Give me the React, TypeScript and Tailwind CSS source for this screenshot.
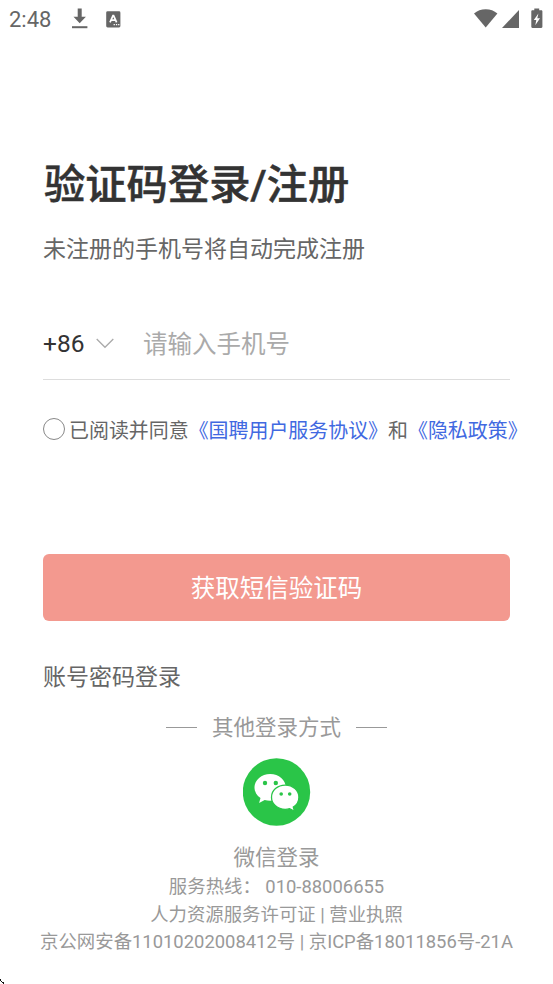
import type { ReactNode } from "react";

/* ─── Icons ──────────────────────────────────────────────────────────────── */
function DownloadIcon() {
  return (
    <svg width="17" height="22" viewBox="0 0 17 22" fill="#666" aria-hidden="true">
      <path d="M6.700.5h4v8.200h4.200L8.700 15.200 2.500 8.700h4.200z" />
      <path d="M1 18.200h15.400v2H1z" />
    </svg>
  );
}

function KeyboardIcon() {
  return (
    <svg width="15" height="17" viewBox="0 0 15 17" aria-hidden="true">
      <rect x="0.2" y="0.3" width="14.2" height="16.2" rx="1.4" fill="#666" />
      <path d="M4 11.4 7 4.6h.6l3 6.8M5.2 9.2h4.2" fill="none" stroke="#fff" strokeWidth="1.7" />
      <path d="M7.6 13h1.3v1.3H7.6zM9.9 13h1.3v1.3H9.900zM12.1 13h1.3v1.3h-1.3z" fill="#fff" />
    </svg>
  );
}

function WifiIcon() {
  return (
    <svg width="24" height="19" viewBox="0 0 24 19" fill="#666" aria-hidden="true">
      <path d="M0 4.600C3.200 1.800 7.200.3 11.700.3s8.500 1.500 11.700 4.300L11.700 18.400z" />
    </svg>
  );
}

function SignalIcon() {
  return (
    <svg width="18" height="18" viewBox="0 0 18 18" fill="#666" aria-hidden="true">
      <path d="M17 0v18H0z" />
    </svg>
  );
}

function BatteryIcon() {
  return (
    <svg width="12" height="21" viewBox="0 0 12 21" aria-hidden="true">
      <path
        d="M3.300.500h4.900v1.700h2.100c.6 0 1.100.5 1.100 1.100v15.500c0 .6-.5 1.100-1.100 1.100H1.400c-.6 0-1.100-.5-1.100-1.100V3.300c0-.6.5-1.100 1.100-1.100h1.900z"
        fill="#666"
      />
      <path d="M7.400 5.400 2.800 12h2.500l-1 5.200L9 10.300H6.300z" fill="#fff" />
    </svg>
  );
}

function WechatIcon() {
  return (
    <svg width="68" height="68" viewBox="0 0 68 68" aria-hidden="true">
      <circle cx="33.500" cy="34" r="33.700" fill="#2ac548" />
      <path
        d="M27.200 16C18.500 16 11.500 22 11.500 29.500c0 4.300 2.300 8 6 10.500l-1.400 4.900 5.600-2.900c1.700.5 3.500.8 5.400.8 8.700 0 15.700-5.900 15.700-13.300S35.900 16 27.200 16z"
        fill="#fff"
      />
      <path
        d="M42.200 27.100c-7.700 0-13.700 5.300-13.700 12.100s6 12.100 13.700 12.100c1.500 0 3-.2 4.400-.6l4.900 2.600-1.200-4.300c3.500-2.100 5.600-5.600 5.600-9.800 0-6.800-6-12.100-13.700-12.100z"
        fill="#fff"
        stroke="#2ac548"
        strokeWidth="1.300"
      />
      <g fill="#2ac548">
        <circle cx="22" cy="25" r="2.200" />
        <circle cx="32.800" cy="25" r="2.200" />
        <circle cx="38.200" cy="36" r="1.800" />
        <circle cx="46.700" cy="36" r="1.800" />
      </g>
    </svg>
  );
}

/* ─── Pieces ─────────────────────────────────────────────────────────────── */
function StatusBar() {
  return (
    <header className="flex h-[38px] items-center justify-between pl-[9px] pr-[10px] text-[#666]">
      <div className="flex items-center">
        <span className="w-[62px] pt-px text-[22px] leading-[38px]">2:48</span>
        <DownloadIcon />
        <span className="ml-[18px]">
          <KeyboardIcon />
        </span>
      </div>
      <div className="flex items-center pb-px">
        <WifiIcon />
        <span className="ml-[4px]">
          <SignalIcon />
        </span>
        <span className="ml-[11px]">
          <BatteryIcon />
        </span>
      </div>
    </header>
  );
}

function Agreement({ children }: { children: ReactNode }) {
  return <a className="text-[#4169e1]">{children}</a>;
}

const footerLines = [
  "服务热线： 010-88006655",
  "人力资源服务许可证 | 营业执照",
  "京公网安备11010202008412号 | 京ICP备18011856号-21A",
];

/* ─── App ────────────────────────────────────────────────────────────────── */
export default function App() {
  return (
    <div className="relative h-[984px] w-[553px] overflow-hidden bg-white font-[Roboto,'Noto_Sans_CJK_SC',sans-serif] text-[#666]">
      <StatusBar />

      <main className="px-[43px] pt-[117px]">
        <h1 className="h-[60px] whitespace-nowrap pl-px text-[41.300px] font-medium leading-[60px] text-[#333] [-webkit-text-stroke:0.5px_#333]">
          验证码登录/注册
        </h1>
        <p className="mt-[19px] h-8 text-[23px] leading-8">未注册的手机号将自动完成注册</p>

        {/* Phone number */}
        <div className="mt-[42px] flex h-[72px] items-center border-b border-[#ddd] text-[24.500px]">
          <span className="w-[53px] pt-[2px] text-[#333]">+86</span>
          <svg width="18" height="11" viewBox="0 0 18 11" fill="none" stroke="#aaa" strokeWidth="1.300" aria-hidden="true">
            <path d="M.7 1 9 9.300 17.300 1" />
          </svg>
          <span className="ml-[29px] pt-[3px] text-[#aaa]">请输入手机号</span>
        </div>

        {/* Terms */}
        <div className="mt-[33px] flex h-8 items-center whitespace-nowrap text-[19.950px]">
          <span className="mr-[4px] size-[22px] shrink-0 rounded-full border-[1.500px] border-[#888]" />
          <span className="pt-[5px]">
            已阅读并同意<Agreement>《国聘用户服务协议》</Agreement>和<Agreement>《隐私政策》</Agreement>
          </span>
        </div>

        <button className="mt-[109px] flex h-[67px] w-full items-center justify-center rounded-[6px] bg-[#f3998f] pt-[3px] text-[24.500px] text-white">
          获取短信验证码
        </button>
        <p className="mt-[41px] h-8 text-[23px] leading-8">账号密码登录</p>
      </main>

      {/* Other sign-in methods */}
      <section className="flex flex-col items-center pt-[17px] text-[21.500px] text-[#999]">
        <div className="flex h-8 items-center gap-[15px]">
          <span className="h-px w-[31px] bg-[#999]" />
          <span className="pt-[3px]">其他登录方式</span>
          <span className="h-px w-[31px] bg-[#999]" />
        </div>
        <div className="mt-[15px]">
          <WechatIcon />
        </div>
        <span className="mt-[16px] h-[31px] leading-8">微信登录</span>
      </section>

      <footer className="whitespace-nowrap text-center text-[18.400px] leading-[27.600px] text-[#999]">
        {footerLines.map((line) => (
          <p key={line}>{line}</p>
        ))}
      </footer>

      <svg className="absolute bottom-0 left-0" width="4" height="5" viewBox="0 0 4 5" aria-hidden="true">
        <path d="M0 0h1v2H0zM1 2h1v1H1zM2 3h2v1H2zM3 4h1v1H3z" fill="#111" />
      </svg>
    </div>
  );
}
